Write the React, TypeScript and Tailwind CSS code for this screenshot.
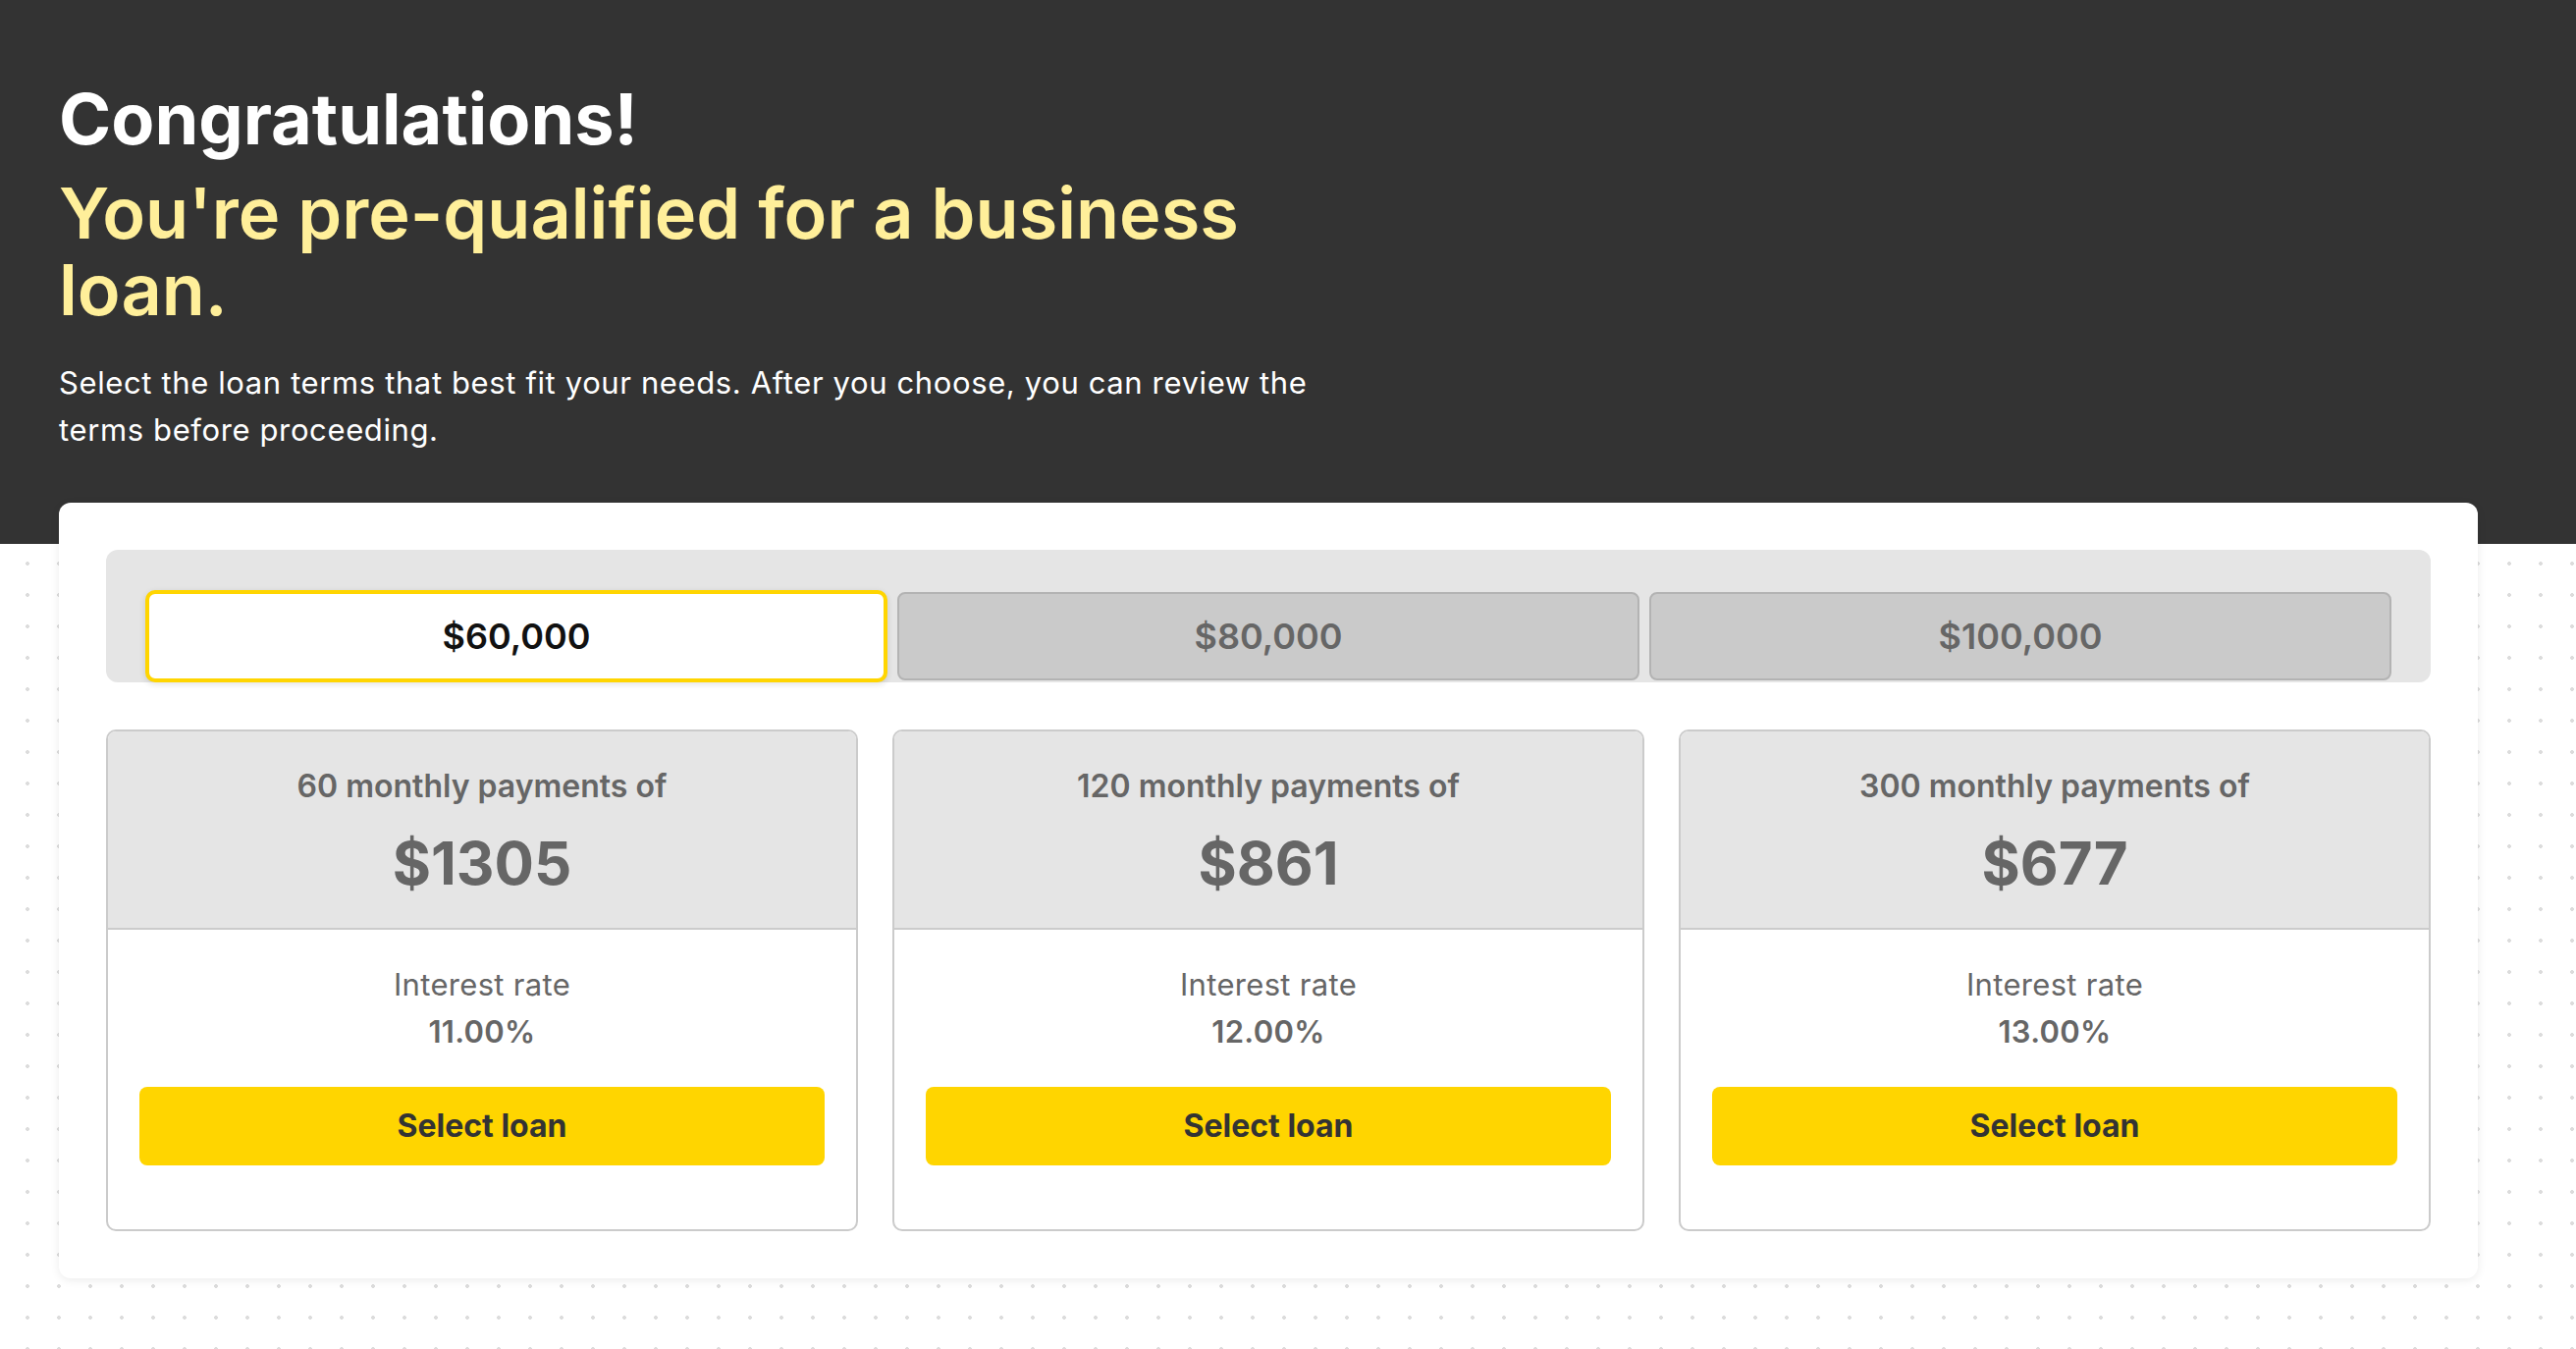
import React, { useState } from 'react';

type Offer = {
  months: number;
  payment: string;
  rate: string;
};

const amounts = ['$60,000', '$80,000', '$100,000'];

const offers: Offer[] = [
  { months: 60, payment: '$1305', rate: '11.00%' },
  { months: 120, payment: '$861', rate: '12.00%' },
  { months: 300, payment: '$677', rate: '13.00%' },
];

export default function App() {
  const [selected, setSelected] = useState(0);

  return (
    <div className="min-h-screen bg-white bg-[radial-gradient(circle,#dcdcdc_1.6px,transparent_2.2px)] bg-[length:32px_32px] bg-[position:12px_14px] font-['Inter','Liberation_Sans',sans-serif] pb-[72px]">
      <header className="bg-[#333333] px-[60px] pt-[81px] pb-[92px]">
        <div className="max-w-[1312px]">
          <h1 className="text-[72px] leading-[79px] font-bold text-white">Congratulations!</h1>
          <h2 className="mt-[18px] text-[72px] leading-[78px] font-semibold text-[#FFEF9A]">
            You're pre-qualified for a business loan.
          </h2>
          <p className="mt-[32px] text-[31px] leading-[48px] tracking-[0.02em] text-white">
            Select the loan terms that best fit your needs. After you choose, you can review the terms before proceeding.
          </p>
        </div>
      </header>

      <main className="relative z-10 -mt-[42px] ml-[60px] w-[2464px] rounded-[12px] bg-white px-12 pt-12 pb-[48px] shadow-[0_2px_10px_rgba(0,0,0,0.08)]">
        <div className="grid grid-cols-3 items-center gap-[10px] rounded-[12px] bg-[#e5e5e5] px-10 pt-[41px]">
          {amounts.map((amount, i) =>
            i === selected ? (
              <button
                key={amount}
                onClick={() => setSelected(i)}
                className="h-[94px] rounded-[10px] border-4 border-[#FFD500] bg-white text-[36px] font-semibold text-[#111111] shadow-[0_2px_6px_rgba(0,0,0,0.12)]"
              >
                {amount}
              </button>
            ) : (
              <button
                key={amount}
                onClick={() => setSelected(i)}
                className="h-[90px] rounded-[8px] border-2 border-[#b3b3b3] bg-[#cacaca] text-[36px] font-semibold text-[#666666]"
              >
                {amount}
              </button>
            )
          )}
        </div>

        <div className="mt-12 grid grid-cols-3 gap-[35px]">
          {offers.map((offer) => (
            <div key={offer.months} className="overflow-hidden rounded-[10px] border-2 border-[#cbcbcb] text-center">
              <div className="border-b-2 border-[#cbcbcb] bg-[#e5e5e5] pt-8 pb-[30px]">
                <p className="text-[32px] leading-[48px] font-semibold text-[#666666]">
                  {offer.months} monthly payments of
                </p>
                <p className="mt-[18px] text-[60px] leading-[72px] font-bold text-[#666666]">{offer.payment}</p>
              </div>
              <div className="px-8 pt-8 pb-[65px]">
                <p className="text-[31px] leading-[48px] tracking-[0.01em] text-[#666666]">Interest rate</p>
                <p className="text-[31px] leading-[48px] tracking-[0.01em] font-semibold text-[#666666]">{offer.rate}</p>
                <button className="mt-8 h-[80px] w-full rounded-[8px] bg-[#FFD500] text-[32px] font-bold text-[#333333]">
                  Select loan
                </button>
              </div>
            </div>
          ))}
        </div>
      </main>
    </div>
  );
}
